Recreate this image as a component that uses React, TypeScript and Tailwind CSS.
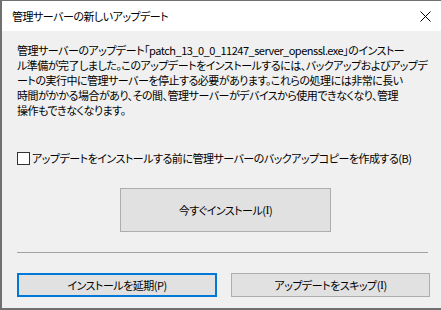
import React from "react";

const font = "[font-family:'Noto_Sans_CJK_JP','Noto_Sans',sans-serif] [font-feature-settings:'palt']";

function Btn({ children, className = "" }: { children: React.ReactNode; className?: string }) {
  return (
    <div className={`flex items-center justify-center bg-[#e1e1e1] text-[11px] tracking-[-0.5px] text-black ${className}`}>
      {children}
    </div>
  );
}

const I = () => <span className="[font-family:'Liberation_Serif',serif] text-[12px]">I</span>;

export default function App() {
  const lines = [
    "管理サーバーのアップデート「patch_13_0_0_11247_server_openssl.exe」のインストー",
    "ル準備が完了しました。このアップデートをインストールするには、バックアップおよびアップデ",
    "ートの実行中に管理サーバーを停止する必要があります。これらの処理には非常に長い",
    "時間がかかる場合があり、その間、管理サーバーがデバイスから使用できなくなり、管理",
    "操作もできなくなります。",
  ];
  return (
    <div className={`w-[441px] h-[310px] overflow-hidden flex flex-col border-l-2 border-t border-b-2 border-[#707070] bg-[#f0f0f0] text-black ${font}`}>
      <div className="h-[30px] shrink-0 bg-white flex items-center justify-between pl-[10px] pr-[9px]">
        <span className="text-[11px] tracking-[-0.5px] leading-none">管理サーバーの新しいアップデート</span>
        <svg width="11" height="11" viewBox="0 0 11 11" className="mr-[1px]">
          <path d="M0.5 0.5 L10.5 10.5 M10.5 0.5 L0.5 10.5" stroke="#000" strokeWidth="1" />
        </svg>
      </div>
      <div className="flex flex-col pl-[15px] pr-[11px] pt-[12px]">
        <div className="text-[11px] tracking-[-0.5px] leading-[15px]">
          {lines.map((l, i) => (
            <div key={i} className="whitespace-nowrap">{l}</div>
          ))}
        </div>
        <div className="mt-[33px] flex items-center h-[15px] gap-[2px]">
          <div className="w-[13px] h-[13px] border border-[#333333] bg-white shrink-0" />
          <span className="text-[11px] tracking-[-0.5px] whitespace-nowrap">アップデートをインストールする前に管理サーバーのバックアップコピーを作成する(B)</span>
        </div>
        <Btn className="mt-[22px] ml-[103px] w-[211px] h-[44px] border border-[#adadad]">
          今すぐインストール(<I />)
        </Btn>
        <div className="mt-[20px] h-px bg-[#a0a0a0] w-[411px]" />
        <div className="mt-[20px] flex gap-[14px]">
          <Btn className="w-[200px] h-[24px] border-2 border-[#0078d7]">インストールを延期(P)</Btn>
          <Btn className="w-[199px] h-[24px] border border-[#adadad]">アップデートをスキップ(<I />)</Btn>
        </div>
      </div>
    </div>
  );
}
